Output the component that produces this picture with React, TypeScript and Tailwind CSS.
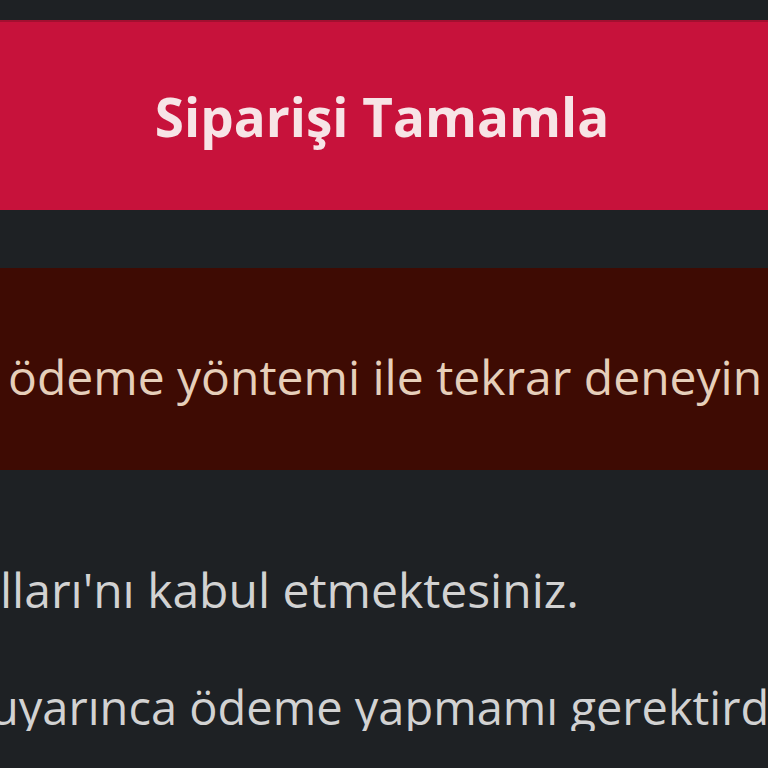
import React from 'react';

const App: React.FC = () => {
  return (
    <div
      className="w-full h-[768px] overflow-hidden bg-[#1e2124] pt-5"
      style={{ fontFamily: '"Open Sans", "Noto Sans", sans-serif' }}
    >
      {/* Submit button */}
      <button className="w-full h-[190px] bg-[#c7123b] flex items-center justify-center pr-1 text-[#f7e4e6] font-bold text-[53px] leading-none border-t-2 border-[#a40f30]">
        Siparişi Tamamla
      </button>

      {/* Error alert */}
      <div className="mt-[58px] h-[202px] bg-[#3e0b03] pt-[85px] overflow-hidden">
        <p className="pl-2 whitespace-nowrap text-[#e6cfba] text-[48px] leading-none">
          ödeme yöntemi ile tekrar deneyin
        </p>
      </div>

      {/* Terms */}
      <div className="mt-[96px] overflow-hidden text-[#d2d2d2] leading-none">
        <p className="whitespace-nowrap text-[48px]">lları'nı kabul etmektesiniz.</p>
        <p className="mt-[70px] -ml-[10px] whitespace-nowrap text-[47px]">uyarınca ödeme yapmamı gerektird</p>
      </div>
    </div>
  );
};

export default App;
